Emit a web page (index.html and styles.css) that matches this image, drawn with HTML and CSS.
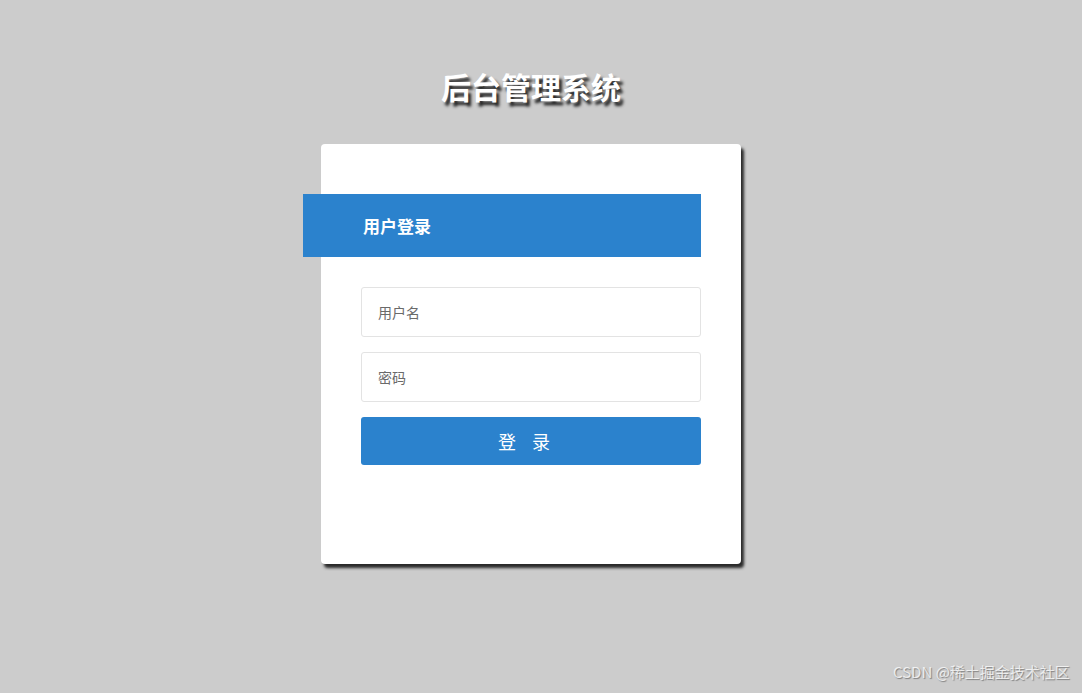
FILE: index.html
```html
<!DOCTYPE html>
<html lang="zh">
<head>
<meta charset="utf-8">
<title>后台管理系统</title>
<link rel="stylesheet" href="styles.css">
</head>
<body>
<div class="page">
  <h1 class="title">后台管理系统</h1>
  <div class="card">
    <div class="band">用户登录</div>
    <form class="form">
      <input class="field" type="text" placeholder="用户名">
      <input class="field" type="password" placeholder="密码">
      <button class="btn" type="button">登 录</button>
    </form>
  </div>
</div>
<div class="watermark">CSDN @稀土掘金技术社区</div>
</body>
</html>
```
FILE: styles.css
```css
html, body {
  margin: 0;
  padding: 0;
  height: 100%;
}
body {
  background: #cccccc;
  font-family: "Noto Sans CJK SC", "Microsoft YaHei", sans-serif;
  overflow: hidden;
  position: relative;
}
.page {
  display: flex;
  flex-direction: column;
  align-items: center;
  padding-top: 66px;
  padding-right: 20px;
}
.title {
  margin: 0;
  height: 78px;
  font-size: 30px;
  line-height: 40px;
  font-weight: 700;
  color: #ffffff;
  text-shadow: 3px 4px 3px #222;
}
.card {
  width: 420px;
  height: 420px;
  box-sizing: border-box;
  background: #ffffff;
  border-radius: 4px;
  box-shadow: 3px 4px 3px #2a2a2a;
  padding-top: 50px;
}
.band {
  margin-left: -18px;
  width: 398px;
  height: 63px;
  box-sizing: border-box;
  background: #2b82cd;
  color: #fff;
  font-size: 17px;
  font-weight: 700;
  line-height: 63px;
  padding-left: 60px;
}
.form {
  display: flex;
  flex-direction: column;
  gap: 15px;
  padding: 30px 40px 0;
}
.field {
  height: 50px;
  box-sizing: border-box;
  border: 1px solid #e3e3e3;
  border-radius: 3px;
  padding: 0 16px;
  font-family: inherit;
  font-size: 14px;
  color: #333;
  outline: none;
}
.field::placeholder {
  color: #6a6a6a;
}
.btn {
  height: 48px;
  border: none;
  border-radius: 3px;
  background: #2b82cd;
  color: #fff;
  font-family: inherit;
  font-size: 18px;
  letter-spacing: 6px;
  padding: 0 8px 0 0;
  cursor: pointer;
}
.watermark {
  position: absolute;
  left: 893px;
  top: 661px;
  font-size: 15px;
  color: rgba(255,255,255,0.75);
  text-shadow: 1px 1px 1px rgba(80,80,80,0.6);
  white-space: nowrap;
}
```
